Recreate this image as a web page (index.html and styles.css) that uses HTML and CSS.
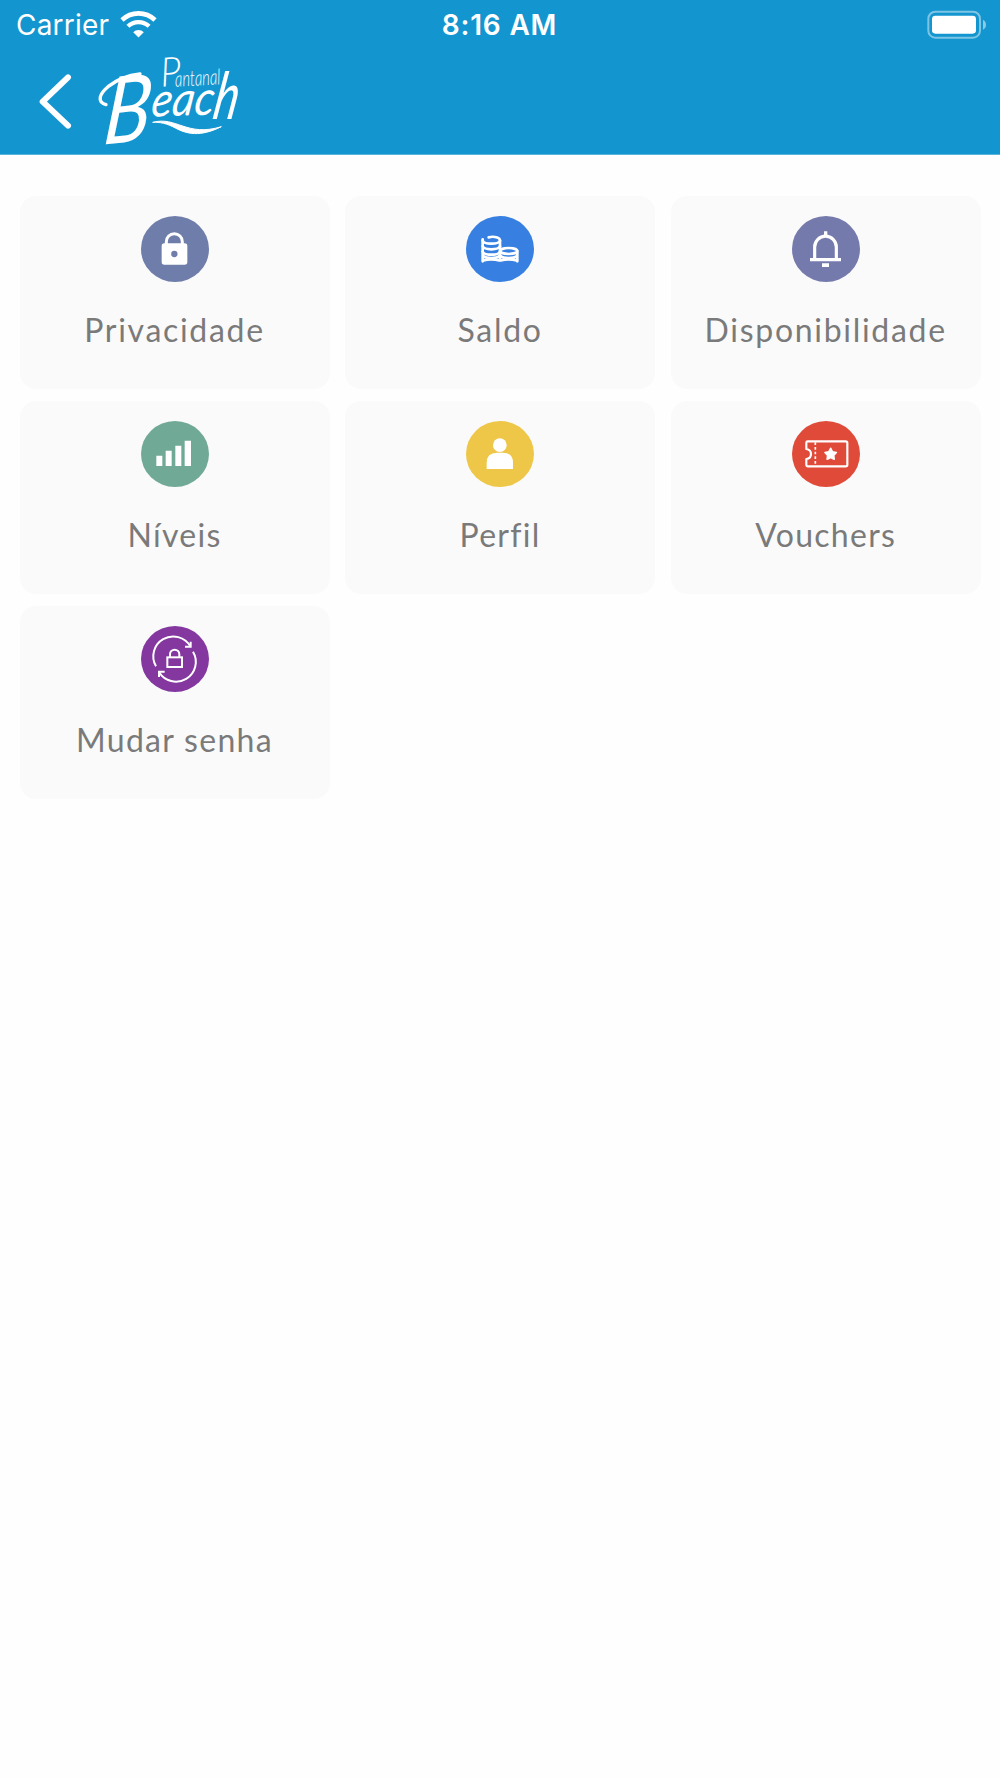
FILE: index.html
```
<!DOCTYPE html>
<html lang="pt-BR">
<head>
<meta charset="utf-8">
<title>Pantanal Beach</title>
<link rel="stylesheet" href="styles.css">
</head>
<body>
<header class="header">
	<div class="status">
		<div class="carrier">
			<span class="carrierName">Carrier</span>
			<svg class="wifi" viewBox="360 28 112 84">
				<path d="M366 58a72 72 0 0 1 100 0" fill="none" stroke="#fff" stroke-width="14"/>
				<path d="M384 77a46 46 0 0 1 64 0" fill="none" stroke="#fff" stroke-width="13"/>
				<path d="M400 95a23 23 0 0 1 32 0l-16 16z" fill="#fff"/>
			</svg>
		</div>
		<div class="clock">8:16 AM</div>
		<div class="power">
			<svg class="battery" viewBox="54 28 180 87">
				<rect x="58" y="33" width="155" height="78" rx="21" fill="none" stroke="#fff" stroke-opacity=".45" stroke-width="6"/>
				<rect x="69" y="45" width="132" height="54" rx="10" fill="#fff"/>
				<path d="M222 57q9 5 9 15t-9 15z" fill="#fff" fill-opacity=".5"/>
			</svg>
		</div>
	</div>
	<div class="bar">
		<svg class="back" viewBox="118 219 99 165">
			<path d="M205 229L129 302l76 72" fill="none" stroke="#fff" stroke-width="18" stroke-linecap="round" stroke-linejoin="round"/>
		</svg>
		<svg class="logo" viewBox="294 162 432 282">
			<g class="logoText">
				<text class="logoTop" transform="translate(484 260) rotate(-4)" font-size="122" textLength="62" lengthAdjust="spacingAndGlyphs">P</text>
				<text class="logoTop" transform="translate(526 260) rotate(-3)" font-size="66" textLength="136" lengthAdjust="spacingAndGlyphs">antanal</text>
				<text transform="translate(306 434) rotate(-6) skewX(-12)" font-size="276" textLength="140" lengthAdjust="spacingAndGlyphs">B</text>
				<text transform="translate(450 350) rotate(-2) skewX(-10)" font-size="142" textLength="188" lengthAdjust="spacingAndGlyphs">eac</text>
				<text transform="translate(634 358) skewX(-10)" font-size="196" textLength="74" lengthAdjust="spacingAndGlyphs">h</text>
			</g>
			<path d="M318 314C290 306 298 282 324 260C352 238 384 226 420 222" fill="none" stroke="#fff" stroke-width="10" stroke-linecap="round"/>
			<path d="M458 367C530 348 560 412 664 380C600 412 560 402 526 384C500 370 480 366 458 367z" fill="#fff" stroke="#fff" stroke-width="3"/>
		</svg>
	</div>
</header>

<main class="menu">
	<a class="card">
		<svg class="icon" viewBox="0 0 204 198">
			<ellipse cx="102" cy="99" rx="102" ry="99" fill="#6f7daa"/>
			<rect x="62" y="82" width="77" height="64" rx="8" fill="#fff"/>
			<path d="M76 86V77a24 24 0 0 1 48 0v9" fill="none" stroke="#fff" stroke-width="9"/>
			<circle cx="100" cy="114" r="9.500" fill="#6f7daa"/>
		</svg>
		<span class="label wide">Privacidade</span>
	</a>
	<a class="card">
		<svg class="icon" viewBox="0 0 204 198">
			<ellipse cx="102" cy="99" rx="102" ry="99" fill="#3780e1"/>
			<g fill="none" stroke="#fff" stroke-width="8" stroke-linecap="round">
				<path d="M50 70v66M102 74v58M154 106v30M68 64c16-4 34 0 34 9"/>
				<path d="M50 74q4 9 26 9t26-9M50 91q4 9 26 9t26-9M50 107q4 9 26 9t26-9M52 133q24-6 48 0"/>
				<path d="M52 120q6 6 24 6t24-6"/>
				<ellipse cx="128" cy="105" rx="26" ry="9"/>
				<path d="M104 120q6 6 24 6t24-6M104 133q24-6 48 0"/>
			</g>
		</svg>
		<span class="label wide">Saldo</span>
	</a>
	<a class="card">
		<svg class="icon" viewBox="0 0 204 198">
			<ellipse cx="102" cy="99" rx="102" ry="99" fill="#757aac"/>
			<path d="M68 130V93a32.500 32.500 0 0 1 65 0v37" fill="none" stroke="#fff" stroke-width="9.500"/>
			<path d="M96 46h10v14H96zM54 126h93v10H54zM90 142h21v11H90z" fill="#fff"/>
		</svg>
		<span class="label wide">Disponibilidade</span>
	</a>
	<a class="card">
		<svg class="icon" viewBox="0 0 204 198">
			<ellipse cx="102" cy="99" rx="102" ry="99" fill="#70a995"/>
			<path d="M46 104h18v31H46zM74 89h18v46H74zM103 74h18v61h-18zM131 59h19v76h-19z" fill="#fff"/>
		</svg>
		<span class="label">Níveis</span>
	</a>
	<a class="card">
		<svg class="icon" viewBox="0 0 204 198">
			<ellipse cx="102" cy="99" rx="102" ry="99" fill="#eec748"/>
			<circle cx="101.500" cy="72.500" r="20.500" fill="#fff"/>
			<path d="M62 144v-18q0-31 31-31h17q31 0 31 31v18z" fill="#fff"/>
		</svg>
		<span class="label">Perfil</span>
	</a>
	<a class="card">
		<svg class="icon" viewBox="0 0 204 198">
			<ellipse cx="102" cy="99" rx="102" ry="99" fill="#e04a39"/>
			<path d="M47 61H161q5 0 5 5v65q0 5-5 5H47q-4 0-4-4V114q14-2 14-15T43 84V65q0-4 4-4z" fill="none" stroke="#fff" stroke-width="6.500" stroke-linejoin="round"/>
			<path d="M70 64v70" fill="none" stroke="#fff" stroke-width="5" stroke-dasharray="8 6"/>
			<path d="M116 82l5.500 10.500 11.500 2-8 8.500 1.500 11.500-10.500-5-10.500 5 1.500-11.500-8-8.500 11.500-2z" fill="#fff" stroke="#fff" stroke-width="5" stroke-linejoin="round"/>
		</svg>
		<span class="label">Vouchers</span>
	</a>
	<a class="card">
		<svg class="icon" viewBox="0 0 204 198">
			<ellipse cx="102" cy="99" rx="102" ry="99" fill="#83379f"/>
			<g fill="none" stroke="#fff" stroke-width="6">
				<path d="M45 121A59 59 0 0 1 148 61M156 77A59 59 0 0 1 54 138"/>
				<path d="M149 47v15h-17M71 137H54v16"/>
				<rect x="79" y="94" width="44" height="29"/>
				<path d="M87 93v-8a14 14 0 0 1 28 0v8"/>
			</g>
		</svg>
		<span class="label">Mudar senha</span>
	</a>
</main>
</body>
</html>
```
FILE: styles.css
```
body {
	margin: 0;
	min-height: 1778px;
	background-color: #fefefe;
}
.header {
	height: 154px;
	background-color: #1395cf;
	border-bottom: 1px solid #5ab5dd;
	color: #fff;
}
.status {
	display: grid;
	grid-template-columns: 1fr auto 1fr;
	align-items: center;
	height: 50px;
	padding: 0 13px 0 16px;
	font-family: Inter, "Liberation Sans", sans-serif;
	font-size: 28px;
	line-height: 51px;
}
.carrier {
	display: flex;
	align-items: center;
}
.carrierName {
	width: 104px;
	letter-spacing: 0.2px;
}
.wifi {
	width: 37px;
	height: 28px;
	margin-top: -3px;
}
.clock {
	margin-right: 4px;
	font-weight: 600;
	letter-spacing: 0.8px;
}
.power {
	display: flex;
	justify-content: flex-end;
}
.battery {
	width: 60px;
	height: 29px;
	margin-top: -2px;
}
.bar {
	display: flex;
	align-items: center;
	height: 102px;
	padding-left: 39px;
}
.back {
	width: 33px;
	height: 55px;
}
.logo {
	width: 144px;
	height: 94px;
	margin-left: 26px;
	overflow: visible;
}
.logoText {
	fill: #fff;
	font-family: Lato, "Liberation Sans", sans-serif;
	font-style: italic;
}
.logoTop {
	font-weight: 300;
}
.menu {
	display: grid;
	grid-template-columns: repeat(3, 310px);
	grid-auto-rows: 193px;
	gap: 12.3px 15.6px;
	padding: 40.7px 0 0 19.5px;
}
.card {
	display: flex;
	flex-direction: column;
	align-items: center;
	padding-top: 20px;
	box-sizing: border-box;
	border-radius: 16px;
	background-color: #fafafa;
}
.icon {
	width: 68px;
	height: 66px;
}
.label {
	margin-top: 28px;
	font-family: Lato, "Open Sans", sans-serif;
	font-size: 32px;
	line-height: 40px;
	letter-spacing: 1.3px;
	color: #7a7a7a;
	white-space: nowrap;
}
.wide {
	letter-spacing: 1.7px;
}
```
